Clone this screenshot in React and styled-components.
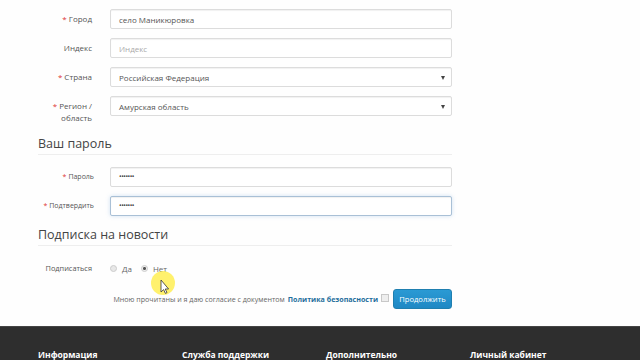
import React from "react";
import styled, { createGlobalStyle } from "styled-components";

const GlobalStyle = createGlobalStyle`
  body {
    margin: 0;
    background: #fefefe;
    font-family: "Open Sans", "Liberation Sans", sans-serif;
    overflow: hidden;
  }
`;

const Page = styled.div`
  position: relative;
  width: 640px;
  height: 360px;
  overflow: hidden;
`;

const Content = styled.div`
  margin-top: -20px;
  padding-left: 38px;
  width: 414px;
`;

const Form = styled.div`
  display: flex;
  flex-direction: column;
  gap: 9px;
`;

const Row = styled.div`
  display: flex;
  align-items: flex-start;
`;

const Label = styled.label`
  width: 72px;
  flex-shrink: 0;
  box-sizing: border-box;
  padding: 4px 18px 0 0;
  text-align: right;
  font-size: 8px;
  line-height: 12px;
  color: #555;
  ${(p) => p.$small && "font-size: 7px; padding-right: 16px; margin-left: -4px; width: 76px;"}
`;

const Star = styled.span`
  color: #d33;
  margin-right: 2px;
`;

const Field = styled.div`
  position: relative;
  width: 342px;
  height: 20px;
  box-sizing: border-box;
  border: 1px solid ${(p) => (p.$focus ? "#a9c0d6" : "#dcdcdc")};
  border-radius: 2px;
  background: #fff;
  box-shadow: ${(p) =>
    p.$focus
      ? "inset 0 1px 1px rgba(0,0,0,0.06), 0 0 4px rgba(120,170,220,0.35)"
      : "inset 0 1px 1px rgba(0,0,0,0.06)"};
  display: flex;
  align-items: center;
  padding-left: 8px;
  font-size: 8px;
  color: ${(p) => (p.$placeholder ? "#aaa" : "#555")};
`;

const Dots = styled.span`
  font-size: 7px;
  letter-spacing: -0.5px;
  color: #444;
  margin-top: -2px;
`;

const Caret = styled.span`
  position: absolute;
  right: 6px;
  top: 8px;
  width: 0;
  height: 0;
  border-left: 2.5px solid transparent;
  border-right: 2.5px solid transparent;
  border-top: 4px solid #444;
`;

const Legend = styled.div`
  margin-top: ${(p) => p.$top}px;
  margin-bottom: 12px;
  height: 20px;
  line-height: 20px;
  font-size: 12.5px;
  color: #444;
  border-bottom: 1px solid #eee;
`;

const RadioRow = styled.div`
  display: flex;
  align-items: center;
  margin-top: 3px;
  height: 20px;
`;

const RadioLabel = styled.span`
  width: 72px;
  box-sizing: border-box;
  padding-right: 18px;
  text-align: right;
  font-size: 7.4px;
  color: #555;
`;

const Radio = styled.span`
  display: inline-flex;
  align-items: center;
  margin-left: ${(p) => p.$ml}px;
  font-size: 8px;
  color: #666;
  &::before {
    content: "";
    width: 5px;
    height: 5px;
    border-radius: 50%;
    border: 1px solid #ccc;
    background: ${(p) =>
      p.$checked ? "radial-gradient(circle, #555 0 1.3px, #eee 1.6px)" : "#e8e8e8"};
    margin-right: 5px;
  }
`;

const Agree = styled.div`
  display: flex;
  justify-content: flex-end;
  align-items: center;
  margin-top: 11px;
  font-size: 7.1px;
  color: #666;
`;

const Policy = styled.b`
  color: #1f6e9c;
  margin-left: 3px;
`;

const Check = styled.span`
  width: 6px;
  height: 6px;
  border: 1px solid #c8c8c8;
  background: #eee;
  margin: -3px 4px 0 3px;
`;

const Button = styled.button`
  width: 59px;
  height: 20px;
  border: 1px solid #1f7fb0;
  border-radius: 3px;
  background: linear-gradient(#2a9ad4, #1f88c4);
  color: #fff;
  font-family: inherit;
  font-size: 7.6px;
  padding: 0;
`;

const Footer = styled.div`
  margin-top: 17px;
  height: 60px;
  background: #2e2e2e;
  border-top: 1px solid #444;
  padding: 22px 0 0 38px;
  display: grid;
  grid-template-columns: repeat(4, 144px);
`;

const FootHead = styled.div`
  color: #fff;
  font-weight: 700;
  font-size: 8.5px;
`;

const Cursor = styled.div`
  position: absolute;
  left: 150px;
  top: 271px;
  width: 26px;
  height: 26px;
`;

function Input({ label, value, placeholder, select, required, focus, small, children }) {
  return (
    <Row>
      <Label $small={small}>
        {required && <Star>*</Star>}
        {label}
      </Label>
      <Field $focus={focus} $placeholder={!!placeholder}>
        {children || value || placeholder}
        {select && <Caret />}
      </Field>
    </Row>
  );
}

export default function App() {
  return (
    <Page>
      <GlobalStyle />
      <Content>
        <Form>
          {/* bottom edge of the field above, scrolled out of view */}
          <Input label="" value="" />
          <Input label="Город" value="село Маникюровка" required />
          <Input label="Индекс" placeholder="Индекс" />
          <Input label="Страна" value="Российская Федерация" required select />
          <Input
            label={
              <>
                Регион /<br />
                область
              </>
            }
            value="Амурская область"
            required
            select
          />
        </Form>
        <Legend $top={10}>Ваш пароль</Legend>
        <Form>
          <Input label="Пароль" required small>
            <Dots>•••••••</Dots>
          </Input>
          <Input label="Подтвердить" required small focus>
            <Dots>•••••••</Dots>
          </Input>
        </Form>
        <Legend $top={9}>Подписка на новости</Legend>
        <RadioRow>
          <RadioLabel>Подписаться</RadioLabel>
          <Radio $ml={0}>Да</Radio>
          <Radio $ml={9} $checked>
            Нет
          </Radio>
        </RadioRow>
        <Agree>
          Мною прочитаны и я даю согласие с документом
          <Policy>Политика безопасности</Policy>
          <Check />
          <Button>Продолжить</Button>
        </Agree>
      </Content>
      <Footer>
        <FootHead>Информация</FootHead>
        <FootHead>Служба поддержки</FootHead>
        <FootHead>Дополнительно</FootHead>
        <FootHead>Личный кабинет</FootHead>
      </Footer>
      <Cursor>
        <svg width="26" height="26" viewBox="0 0 26 26">
          <circle cx="13" cy="12" r="12" fill="rgba(255,236,60,0.75)" />
          <path
            d="M11 9 L11 21 L13.6 18.6 L15.4 22.4 L17 21.6 L15.2 18 L18.6 18 Z"
            fill="#fff"
            stroke="#333"
            strokeWidth="0.8"
            strokeLinejoin="round"
          />
        </svg>
      </Cursor>
    </Page>
  );
}
